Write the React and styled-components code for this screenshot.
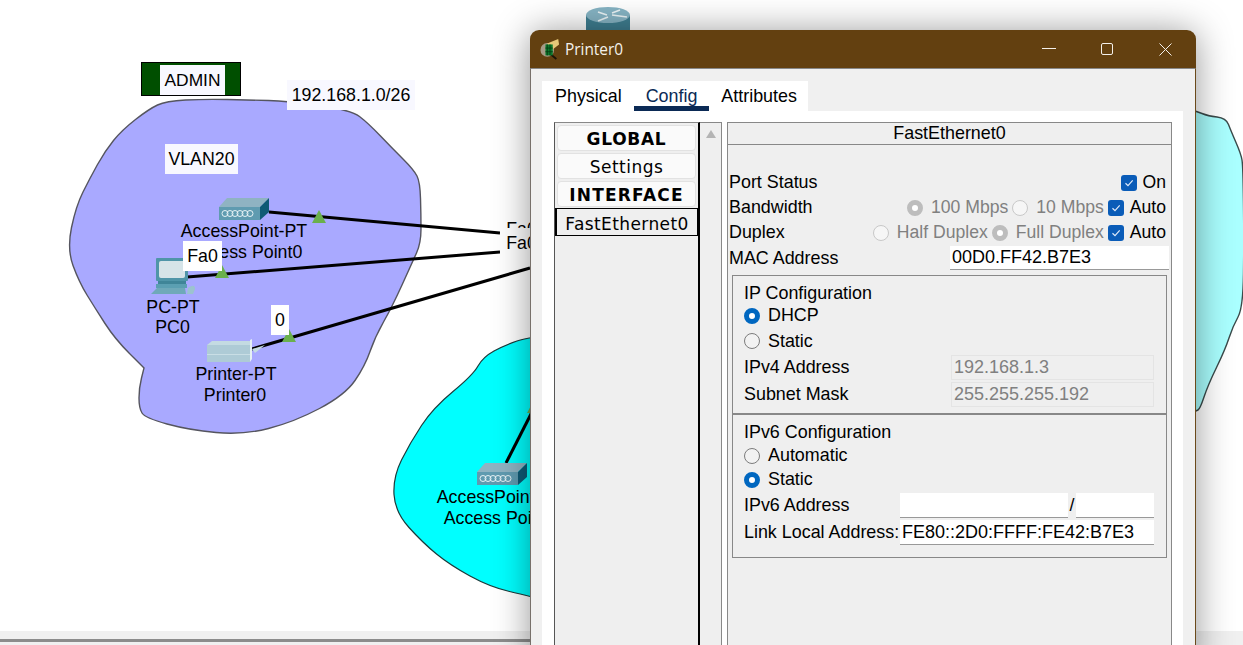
import React from 'react';
import styled, { createGlobalStyle } from 'styled-components';

const GlobalStyle = createGlobalStyle`
  html, body {
    margin: 0;
    padding: 0;
    background: #ffffff;
  }
  body {
    font-family: "Liberation Sans", Arial, sans-serif;
    color: #000;
  }
`;

const Page = styled.div`
  position: relative;
  width: 1243px;
  height: 645px;
  overflow: hidden;
  background: #ffffff;
`;

const Canvas = styled.svg`
  position: absolute;
  left: 0;
  top: 0;
  width: 1243px;
  height: 645px;
`;

const BottomBar = styled.div`
  position: absolute;
  left: 0;
  right: 0;
  top: 631px;
  height: 14px;
  background: #f0f0f0;

  &::after {
    content: '';
    display: block;
    width: 900px;
    height: 3px;
    margin-top: 8px;
    background: #8c8c8c;
  }
`;

const CanvasLabel = styled.div`
  position: absolute;
  left: ${(p) => p.$x}px;
  top: ${(p) => p.$y}px;
  width: ${(p) => p.$w}px;
  height: ${(p) => p.$h}px;
  display: flex;
  align-items: center;
  justify-content: center;
  background: ${(p) => p.$bg || 'transparent'};
  font-size: 17.8px;
  white-space: nowrap;
  color: #000;
`;

const AdminBox = styled.div`
  position: absolute;
  left: 141px;
  top: 62px;
  width: 100px;
  height: 34px;
  box-sizing: border-box;
  border: 1px solid #000;
  background: #004f00;
  display: flex;
  padding-left: 18px;
  align-items: flex-end;
`;

const AdminText = styled.span`
  background: #f8f8ff;
  width: 65px;
  height: 30px;
  display: flex;
  align-items: center;
  justify-content: center;
  font-size: 17.4px;
`;

const Window = styled.div`
  position: absolute;
  left: 530px;
  top: 30px;
  width: 666px;
  height: 640px;
  display: flex;
  flex-direction: column;
  border-radius: 9px 9px 0 0;
  box-shadow: 0 2px 36px rgba(0, 0, 0, 0.42);
  overflow: hidden;
  background: #f0f0f0;
`;

const TitleBar = styled.div`
  height: 38px;
  flex: none;
  background: #634010;
  display: flex;
  align-items: center;
  padding: 0 2px 0 10px;
  color: #f4f0ea;
`;

const TitleText = styled.span`
  font-family: "Open Sans", "Noto Sans", sans-serif;
  font-size: 15.4px;
  margin-left: 5px;
  flex: 1;
`;

const WinButton = styled.div`
  width: 58px;
  height: 38px;
  display: flex;
  align-items: center;
  justify-content: center;
`;

const WinBody = styled.div`
  flex: 1;
  display: flex;
  flex-direction: column;
  border: 1px solid #888;
  border-left-color: #77706a;
  border-right-color: #6b4a1a;
  padding: 12px 12px 0 11px;
  min-height: 0;
`;

const TabRow = styled.div`
  display: flex;
  gap: 12px;
  align-self: flex-start;
  width: 266px;
  height: 30px;
  background: #fff;
  padding-left: 13px;
  box-sizing: border-box;
  flex: none;
`;

const Tab = styled.div`
  font-size: 17.9px;
  height: 30px;
  box-sizing: border-box;
  line-height: 30px;
  padding: 0 ${(p) => (p.$active ? 12 : 0)}px;
  color: ${(p) => (p.$active ? '#0b2a55' : '#000')};
  border-bottom: ${(p) => (p.$active ? '5px solid #0b2a55' : 'none')};
`;

const TabPanel = styled.div`
  flex: 1;
  background: #fff;
  display: flex;
  padding: 11px 11px 0 12px;
  min-height: 0;
`;

const SideList = styled.div`
  width: 146px;
  flex: none;
  box-sizing: border-box;
  background: #efefef;
  border-top: 1px solid #888;
  border-left: 1px solid #555;
  border-right: 2px solid #000;
  padding-top: 2px;
  display: flex;
  flex-direction: column;
  font-family: "DejaVu Sans", Verdana, sans-serif;
  font-size: 17px;
`;

const SideItem = styled.div`
  height: 26px;
  margin: 0 2px 2px 2px;
  padding-top: 2px;
  box-sizing: border-box;
  border: 1px solid #e2e2e2;
  border-radius: 4px;
  background: #fafafa;
  display: flex;
  align-items: center;
  justify-content: center;
  font-weight: ${(p) => (p.$bold ? 700 : 400)};
  letter-spacing: ${(p) => p.$ls || 0.5}px;
`;

const SideSelected = styled.div`
  height: 28px;
  margin-top: -1px;
  padding-top: 3px;
  box-sizing: border-box;
  border: 1px solid #000;
  border-left-width: 2px;
  background: #efefef;
  display: flex;
  align-items: center;
  justify-content: center;
  letter-spacing: 0.4px;
`;

const ScrollCol = styled.div`
  width: 22px;
  flex: none;
  box-sizing: border-box;
  background: #efefef;
  border-top: 1px solid #888;
  border-right: 1px solid #888;
  display: flex;
  justify-content: center;
  padding-top: 7px;
  margin-right: 5px;
`;

const UpArrow = styled.div`
  width: 0;
  height: 0;
  border-left: 5px solid transparent;
  border-right: 5px solid transparent;
  border-bottom: 8px solid #b4b4b4;
`;

const ConfigPanel = styled.div`
  flex: 1;
  box-sizing: border-box;
  background: #efefef;
  border: 1px solid #888;
  border-bottom: none;
  display: flex;
  flex-direction: column;
  font-size: 17.9px;
`;

const PanelHeader = styled.div`
  height: 21px;
  flex: none;
  border-bottom: 1px solid #888;
  text-align: center;
  line-height: 21px;
  margin-bottom: 25px;
`;

const Row = styled.div`
  height: ${(p) => p.$h || 25}px;
  display: flex;
  align-items: center;
  padding: 0 5px 0 1px;
  flex: none;
`;

const Label = styled.span`
  flex: 1;
`;

const Option = styled.span`
  display: flex;
  align-items: center;
  gap: ${(p) => p.$gap || 8}px;
  margin-left: 4px;
  font-size: 17.6px;
  color: ${(p) => (p.$off ? '#808080' : '#000')};
`;

const Radio = styled.span`
  width: 16px;
  height: 16px;
  flex: none;
  box-sizing: border-box;
  border-radius: 50%;
  background: ${(p) => (p.$on ? '#fff' : p.$off ? '#f6f6f6' : '#f2f2f2')};
  border: ${(p) =>
    p.$on
      ? `5px solid ${p.$off ? '#bdbdbd' : '#0067c0'}`
      : `1px solid ${p.$off ? '#c8c8c8' : '#7c7c7c'}`};
`;

const Check = styled.span`
  width: 16px;
  height: 16px;
  flex: none;
  border-radius: 3px;
  background: #0a5cb8;
  display: flex;
  align-items: center;
  justify-content: center;
`;

const MacInput = styled.div`
  width: 219px;
  height: 24px;
  margin-right: -3px;
  box-sizing: border-box;
  background: #fff;
  border-bottom: 1px solid #999;
  padding-left: 2px;
  line-height: 22px;
  font-size: 18px;
`;

const IpBox = styled.div`
  margin: 4px 4px 0 4px;
  border: 1px solid #888;
  display: flex;
  flex-direction: column;
`;

const IpSection = styled.div`
  height: ${(p) => p.$h}px;
  box-sizing: border-box;
  padding: 5px 12px 0 11px;
  border-bottom: ${(p) => (p.$divide ? '2px solid #888' : 'none')};
`;

const SectionTitle = styled.div`
  height: 24px;
  line-height: 24px;
`;

const RadioRow = styled.div`
  height: ${(p) => p.$h || 25}px;
  display: flex;
  align-items: center;
  gap: 8px;
`;

const FieldRow = styled.div`
  height: ${(p) => p.$h || 27}px;
  display: flex;
  align-items: center;
`;

const FieldLabel = styled.span`
  width: ${(p) => p.$w}px;
  flex: none;
  white-space: nowrap;
`;

const ReadField = styled.div`
  flex: 1;
  height: 25px;
  box-sizing: border-box;
  background: #efefef;
  border: 1px solid #e4e4e4;
  color: #808080;
  padding-left: 2px;
  line-height: 23px;
  font-size: 18px;
`;

const TextField = styled.div`
  flex: ${(p) => (p.$w ? 'none' : 1)};
  width: ${(p) => (p.$w ? `${p.$w}px` : 'auto')};
  height: 25px;
  box-sizing: border-box;
  background: #fff;
  border-bottom: 1px solid #999;
  padding-left: 2px;
  line-height: 24px;
  white-space: nowrap;
  font-size: 18px;
`;

const Slash = styled.span`
  width: 8px;
  flex: none;
  text-align: center;
`;

// rounds the corners of a hand-traced outline, so the clouds look drawn and not polygonal
const cloudPath = (pts) => {
  const mid = (a, b) => [(a[0] + b[0]) / 2, (a[1] + b[1]) / 2];
  const start = mid(pts[pts.length - 1], pts[0]);
  let d = `M${start[0]} ${start[1]}`;
  pts.forEach((p, i) => {
    const m = mid(p, pts[(i + 1) % pts.length]);
    d += ` Q${p[0]} ${p[1]} ${m[0]} ${m[1]}`;
  });
  return d + ' Z';
};

const adminCloud = [
  [166, 101], [205, 99], [250, 100], [287, 101], [351, 110], [368, 123], [392, 148], [414, 170],
  [420, 182], [421, 215], [421, 243], [412, 263], [392, 307], [375, 337], [365, 366], [345, 395],
  [294, 422], [243, 435], [189, 430], [145, 418], [139, 408], [139, 388], [144, 368], [144, 368],
  [115, 339], [95, 308], [79, 282], [67, 249], [76, 206], [90, 178], [105, 151], [122, 130], [149, 109],
];

const guestCloud = [
  [600, 330], [529, 337], [505, 345], [483, 357], [473, 375], [433, 408], [410, 443], [393, 477],
  [395, 512], [423, 543], [450, 565], [490, 587], [529, 596], [600, 615],
];

const rightCloud = [
  [1170, 104], [1196, 111], [1208, 116], [1226, 118], [1231, 131], [1241, 154], [1243, 166],
  [1244, 240], [1243, 308], [1233, 326], [1225, 350], [1208, 385], [1200, 409], [1196, 411], [1170, 420],
];

const Tick = () => (
  <svg width="10" height="8" viewBox="0 0 10 8" fill="none" stroke="#dfeafa" strokeWidth="1.2">
    <path d="M1.5 4.2 L4 6.6 L8.7 1.4" />
  </svg>
);

const PrinterIcon = () => (
  <svg width="20" height="22" viewBox="0 0 22 24">
    <circle cx="8" cy="13" r="7.5" fill="#a59a86" />
    <line x1="12" y1="18" x2="18" y2="23" stroke="#1b1408" strokeWidth="2" />
    <path d="M8 6 L20 1 L21 7 L12 14 Z" fill="#e6c878" />
    <rect x="6" y="7" width="8" height="12" fill="#0c7a2c" />
    <path d="M8 7 V19 M11 7 V19 M6 11 H14 M6 15 H14" stroke="#063d14" strokeWidth="1" />
  </svg>
);

// AP box, drawn at its top-left corner
const AccessPoint = ({ x, y }) => (
  <g transform={`translate(${x} ${y})`}>
    <path d="M8 0 H50 L41 9 H0 Z" fill="#8fb3c2" />
    <path d="M50 0 V14 L41 22 V9 Z" fill="#0e5a75" />
    <rect x="0" y="9" width="41" height="13" fill="#5f9bb0" />
    {[5, 10, 15, 20, 25, 30].map((cx) => (
      <circle key={cx} cx={cx + 1} cy="15.5" r="3" fill="none" stroke="#e6f2f5" strokeWidth="1" />
    ))}
  </g>
);

const Marker = ({ x, y }) => (
  <path d={`M${x} ${y} L${x + 7} ${y + 13} H${x - 7} Z`} fill="#6ab04c" />
);

export default function App() {
  return (
    <Page>
      <GlobalStyle />
      <BottomBar />
      <Canvas viewBox="0 0 1243 645">
        <path d={cloudPath(adminCloud)} fill="#a9a9ff" stroke="#55555f" strokeWidth="1.4" />
        <path d={cloudPath(guestCloud)} fill="#00ffff" stroke="#1c3a3a" strokeWidth="1.2" />
        <path d={cloudPath(rightCloud)} fill="#aaffff" stroke="#3a4a4a" strokeWidth="1.4" />

        {/* router poking out above the window */}
        <path d="M586 15 V34 H630 V15 Z" fill="#3f7f92" />
        <ellipse cx="608" cy="15" rx="22" ry="8" fill="#86b4c4" />
        <path d="M598 12 L607 15 M612 13 L620 10 M598 21 L608 17 M612 15 L627 17" stroke="#eaf4f6" strokeWidth="1.6" />

        <line x1="269" y1="212" x2="500" y2="233" stroke="#000" strokeWidth="3" />
        <line x1="187" y1="277" x2="500" y2="252" stroke="#000" strokeWidth="3" />
        <line x1="252" y1="349" x2="530" y2="268" stroke="#000" strokeWidth="3" />
        <line x1="506" y1="463" x2="532" y2="412" stroke="#000" strokeWidth="3" />

        <AccessPoint x={219} y={198} />
        <AccessPoint x={477} y={463} />

        {/* PC */}
        <g transform="translate(151 258)">
          <rect x="5" y="0" width="32" height="23" rx="1" fill="#4f95a8" />
          <rect x="8" y="3" width="26" height="17" rx="2" fill="#d6e4e8" />
          <rect x="7" y="23" width="28" height="3" fill="#3f8598" />
          <rect x="5" y="26" width="31" height="4" fill="#5b9fb2" />
          <path d="M6 30 H34 L35 36 H0 Z" fill="#6fa9b9" />
          <path d="M37 30 Q44 25 44 31 L42 36 H36 Z" fill="#9cc3cf" />
        </g>

        {/* Printer */}
        <g transform="translate(207 339)">
          <path d="M5 2 H43 V6 H0 Z" fill="#c4dbe2" />
          <rect x="0" y="6" width="43" height="17" fill="#aecbd6" />
          <rect x="0" y="15" width="43" height="1" fill="#c9dee5" />
          <path d="M43 1 L45 0 V20 L43 23 Z" fill="#e6f1f4" />
          <path d="M45 10 L58 6 L48 14 Z" fill="#c4dbe2" />
        </g>

        <Marker x={319} y={210} />
        <Marker x={222} y={265} />
        <Marker x={289} y={329} />
        <Marker x={534} y={400} />
      </Canvas>

      <AdminBox><AdminText>ADMIN</AdminText></AdminBox>
      <CanvasLabel $x={287} $y={80} $w={128} $h={30} $bg="#f8f8ff">192.168.1.0/26</CanvasLabel>
      <CanvasLabel $x={165} $y={144} $w={73} $h={30} $bg="#f8f8ff">VLAN20</CanvasLabel>

      <CanvasLabel $x={179} $y={220} $w={130} $h={22}>AccessPoint-PT</CanvasLabel>
      <CanvasLabel $x={186} $y={241} $w={120} $h={22}>Access Point0</CanvasLabel>
      <CanvasLabel $x={183} $y={241} $w={39} $h={30} $bg="#fff">Fa0</CanvasLabel>
      <CanvasLabel $x={140} $y={296} $w={66} $h={22}>PC-PT</CanvasLabel>
      <CanvasLabel $x={140} $y={316} $w={65} $h={22}>PC0</CanvasLabel>
      <CanvasLabel $x={186} $y={363} $w={100} $h={22}>Printer-PT</CanvasLabel>
      <CanvasLabel $x={185} $y={384} $w={100} $h={22}>Printer0</CanvasLabel>
      <CanvasLabel $x={271} $y={305} $w={18} $h={30} $bg="#fff">0</CanvasLabel>

      <CanvasLabel $x={500} $y={214} $w={43} $h={30} $bg="#fff">Fa0</CanvasLabel>
      <CanvasLabel $x={500} $y={228} $w={43} $h={30} $bg="#fff">Fa0</CanvasLabel>

      <CanvasLabel $x={435} $y={486} $w={130} $h={22}>AccessPoint-PT</CanvasLabel>
      <CanvasLabel $x={435} $y={507} $w={130} $h={22}>Access Point0</CanvasLabel>

      <Window>
        <TitleBar>
          <PrinterIcon />
          <TitleText>Printer0</TitleText>
          <WinButton>
            <svg width="14" height="2" viewBox="0 0 14 2"><rect width="14" height="1" fill="#f4f0ea" /></svg>
          </WinButton>
          <WinButton>
            <svg width="12" height="12" viewBox="0 0 12 12" fill="none" stroke="#f4f0ea">
              <rect x="0.5" y="0.5" width="11" height="11" rx="1.5" />
            </svg>
          </WinButton>
          <WinButton>
            <svg width="13" height="13" viewBox="0 0 13 13" fill="none" stroke="#f4f0ea">
              <path d="M0.5 0.5 L12.5 12.5 M12.5 0.5 L0.5 12.5" />
            </svg>
          </WinButton>
        </TitleBar>
        <WinBody>
          <TabRow>
            <Tab>Physical</Tab>
            <Tab $active>Config</Tab>
            <Tab>Attributes</Tab>
          </TabRow>
          <TabPanel>
            <SideList>
              <SideItem $bold $ls={0.7}>GLOBAL</SideItem>
              <SideItem>Settings</SideItem>
              <SideItem $bold $ls={1.2}>INTERFACE</SideItem>
              <SideSelected>FastEthernet0</SideSelected>
            </SideList>
            <ScrollCol><UpArrow /></ScrollCol>
            <ConfigPanel>
              <PanelHeader>FastEthernet0</PanelHeader>
              <Row>
                <Label>Port Status</Label>
                <Option $gap={6}><Check><Tick /></Check>On</Option>
              </Row>
              <Row>
                <Label>Bandwidth</Label>
                <Option $off><Radio $on $off />100 Mbps</Option>
                <Option $off><Radio $off />10 Mbps</Option>
                <Option $gap={6}><Check><Tick /></Check>Auto</Option>
              </Row>
              <Row>
                <Label>Duplex</Label>
                <Option $off><Radio $off />Half Duplex</Option>
                <Option $off><Radio $on $off />Full Duplex</Option>
                <Option $gap={6}><Check><Tick /></Check>Auto</Option>
              </Row>
              <Row $h={26}>
                <Label>MAC Address</Label>
                <MacInput>00D0.FF42.B7E3</MacInput>
              </Row>
              <IpBox>
                <IpSection $h={139} $divide>
                  <SectionTitle>IP Configuration</SectionTitle>
                  <RadioRow $h={21}><Radio $on />DHCP</RadioRow>
                  <RadioRow $h={30}><Radio />Static</RadioRow>
                  <FieldRow $h={22}><FieldLabel $w={207}>IPv4 Address</FieldLabel><ReadField>192.168.1.3</ReadField></FieldRow>
                  <FieldRow $h={32}><FieldLabel $w={207}>Subnet Mask</FieldLabel><ReadField>255.255.255.192</ReadField></FieldRow>
                </IpSection>
                <IpSection $h={142}>
                  <SectionTitle>IPv6 Configuration</SectionTitle>
                  <RadioRow $h={23}><Radio />Automatic</RadioRow>
                  <RadioRow><Radio $on />Static</RadioRow>
                  <FieldRow>
                    <FieldLabel $w={156}>IPv6 Address</FieldLabel>
                    <TextField $w={168} />
                    <Slash>/</Slash>
                    <TextField />
                  </FieldRow>
                  <FieldRow>
                    <FieldLabel $w={156}>Link Local Address:</FieldLabel>
                    <TextField>FE80::2D0:FFFF:FE42:B7E3</TextField>
                  </FieldRow>
                </IpSection>
              </IpBox>
            </ConfigPanel>
          </TabPanel>
        </WinBody>
      </Window>
    </Page>
  );
}
